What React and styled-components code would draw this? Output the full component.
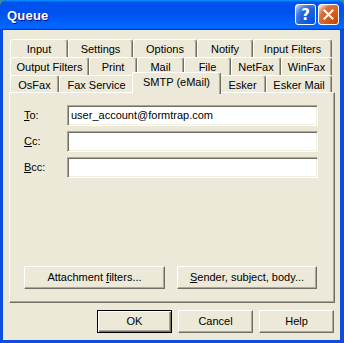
import React from 'react'
import styled, { createGlobalStyle, css } from 'styled-components'

const face = '#ece9d8'
const shadow = '#aca899'
const darkShadow = '#716f64'

const GlobalStyle = createGlobalStyle`
  body {
    margin: 0;
    background: #3a8d9e;
  }
`

const Window = styled.div`
  width: 344px;
  height: 343px;
  display: flex;
  flex-direction: column;
  background: #0b4ee0;
  border-radius: 7px 7px 0 0;
  overflow: hidden;
  font-family: 'Liberation Sans', Arial, sans-serif;
  font-size: 11px;
  color: #000;
`

const TitleBar = styled.div`
  height: 30px;
  flex: none;
  display: flex;
  align-items: center;
  padding: 0 5px 0 7px;
  box-sizing: border-box;
  background: linear-gradient(180deg, #0997ff, #0053ee 8%, #0050ee 40%, #06f 88%, #06f 93%, #005bff 95%, #003dd7 96%, #003dd7);
`

const Title = styled.div`
  flex: 1;
  color: #fff;
  font-weight: bold;
  font-size: 13px;
  letter-spacing: 0.2px;
  padding-top: 1px;
  text-shadow: 1px 1px #0f1089;
`

const CaptionButtons = styled.div`
  display: flex;
  gap: 2px;
  margin-top: -1px;
`

const CaptionButton = styled.div`
  width: 21px;
  height: 21px;
  box-sizing: border-box;
  border: 1px solid #fff;
  border-radius: 3px;
  display: flex;
  align-items: center;
  justify-content: center;
  color: #fff;
  font: bold 15px 'DejaVu Sans', sans-serif;
  background: ${({ $close }) => $close
    ? 'radial-gradient(circle at 90% 90%, #cc4600 0%, #dc6527 55%, #cd7546 70%, #ffccb2 90%, #fff 100%)'
    : 'radial-gradient(circle at 90% 90%, #0054e9 0%, #2263d5 55%, #4479e4 70%, #a3bbec 90%, #fff 100%)'};
`

const Client = styled.div`
  flex: 1;
  margin: 0 4px 3px 3px;
  background: ${face};
  padding: 9px 5px 7px 6px;
  display: flex;
  flex-direction: column;
`

const TabStrip = styled.div`
  padding: 0 3px 0 1px;
  display: flex;
  flex-direction: column;
`

const TabRow = styled.div`
  display: flex;
  height: 18px;
  align-items: flex-start;
`

const Tab = styled.div`
  box-sizing: border-box;
  flex: none;
  width: ${({ $w }) => $w}px;
  height: 18px;
  background: ${face};
  border-top: 1px solid #fff;
  border-left: 1px solid #fff;
  border-right: 1px solid ${darkShadow};
  box-shadow: inset -1px 0 ${shadow};
  border-radius: 3px 3px 0 0;
  display: flex;
  align-items: center;
  justify-content: center;
  white-space: nowrap;
  padding-top: 1px;

  ${({ $active, $w }) => $active && css`
    position: relative;
    z-index: 2;
    width: ${$w + 4}px;
    height: 22px;
    margin: -3px -2px 0;
    padding: 0 0 4px;
  `}
`

const Panel = styled.div`
  position: relative;
  z-index: 1;
  box-sizing: border-box;
  height: 211px;
  margin-top: -1px;
  border-top: 1px solid #fff;
  border-left: 1px solid #fff;
  border-right: 1px solid ${darkShadow};
  border-bottom: 1px solid ${darkShadow};
  box-shadow: inset -1px -1px ${shadow};
  padding: 12px 0 13px 14px;
  display: flex;
  flex-direction: column;
`

const Fields = styled.div`
  display: grid;
  grid-template-columns: 43px 251px;
  grid-auto-rows: 21px;
  row-gap: 5px;
  align-items: center;
`

const Label = styled.label`
  padding-bottom: 1px;
`

const Field = styled.div`
  box-sizing: border-box;
  height: 21px;
  background: #fff;
  border-top: 1px solid ${shadow};
  border-left: 1px solid ${shadow};
  border-right: 1px solid #fff;
  border-bottom: 1px solid #fff;
  box-shadow: inset 1px 1px ${darkShadow}, inset -1px -1px #f1efe2;
  padding: 0 0 1px 3px;
  display: flex;
  align-items: center;
`

const ButtonRow = styled.div`
  margin-top: auto;
  display: flex;
  gap: 12px;
  justify-content: ${({ $end }) => ($end ? 'flex-end' : 'flex-start')};
  ${({ $end }) => $end && css`
    gap: 6px;
    margin-top: 7px;
    padding-right: 1px;
  `}
`

const Button = styled.div`
  box-sizing: border-box;
  width: ${({ $w }) => $w}px;
  height: 23px;
  background: ${face};
  border: 1px solid;
  border-color: #fff ${darkShadow} ${darkShadow} #fff;
  box-shadow: inset -1px -1px ${shadow};
  display: flex;
  align-items: center;
  justify-content: center;
  padding-bottom: 1px;

  ${({ $default }) => $default && css`
    border-color: #000;
    box-shadow: inset 1px 1px #fff, inset -1px -1px ${darkShadow}, inset -2px -2px ${shadow};
  `}
`

const tabRows = [
  [['Input', 58], ['Settings', 65], ['Options', 64], ['Notify', 56], ['Input Filters', 79]],
  [['Output Filters', 79], ['Print', 48], ['Mail', 47], ['File', 47], ['NetFax', 50], ['WinFax', 51]],
  [['OsFax', 49], ['Fax Service', 75], ['SMTP (eMail)', 85], ['Esker', 47], ['Esker Mail', 66]],
]

const CloseIcon = () => (
  <svg width="13" height="13" viewBox="0 0 13 13">
    <path d="M2.5 2.5 L10.5 10.5 M10.5 2.5 L2.5 10.5" stroke="#fff" strokeWidth="2" strokeLinecap="square" />
  </svg>
)

export default function App() {
  return (
    <>
      <GlobalStyle />
      <Window>
        <TitleBar>
          <Title>Queue</Title>
          <CaptionButtons>
            <CaptionButton>?</CaptionButton>
            <CaptionButton $close><CloseIcon /></CaptionButton>
          </CaptionButtons>
        </TitleBar>
        <Client>
          <TabStrip>
            {tabRows.map((row, r) => (
              <TabRow key={r}>
                {row.map(([name, w]) => (
                  <Tab key={name} $w={w} $active={name === 'SMTP (eMail)'}>{name}</Tab>
                ))}
              </TabRow>
            ))}
          </TabStrip>
          <Panel>
            <Fields>
              <Label><u>T</u>o:</Label>
              <Field>user_account@formtrap.com</Field>
              <Label><u>C</u>c:</Label>
              <Field />
              <Label><u>B</u>cc:</Label>
              <Field />
            </Fields>
            <ButtonRow>
              <Button $w={141}>Attachment&nbsp;<u>f</u>ilters...</Button>
              <Button $w={140}><u>S</u>ender, subject, body...</Button>
            </ButtonRow>
          </Panel>
          <ButtonRow $end>
            <Button $w={75} $default>OK</Button>
            <Button $w={75}>Cancel</Button>
            <Button $w={75}>Help</Button>
          </ButtonRow>
        </Client>
      </Window>
    </>
  )
}
